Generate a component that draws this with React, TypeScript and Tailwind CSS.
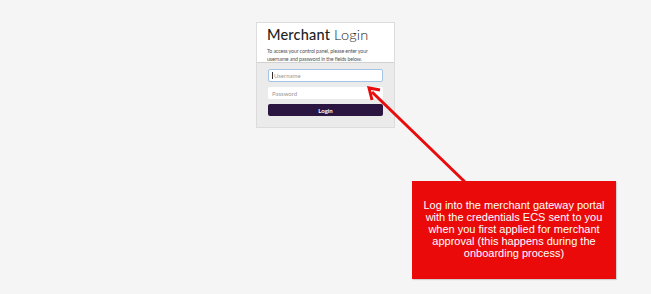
import React from "react";

export default function App() {
  return (
    <div className="relative w-[651px] h-[294px] bg-[#f5f5f5] overflow-hidden" style={{ fontFamily: "Lato, 'Open Sans', sans-serif" }}>
      <div className="flex justify-center pt-[22px]">
        <div className="w-[139px] border border-[#dcdcdc] bg-[#ebebeb]">
          <div className="bg-white pl-[10px] pt-[4px] h-[40px] border-b border-[#d0d0d0]">
            <div className="text-[14.5px] leading-[16px] text-[#222] tracking-[0.2px]">
              <span className="font-medium">Merchant</span> <span className="font-light">Login</span>
            </div>
            <div className="text-[5.3px] leading-[8px] text-[#555] mt-[4px] whitespace-nowrap tracking-[-0.15px]">
              To access your control panel, please enter your<br />username and password in the fields below.
            </div>
          </div>
          <div className="px-[11px] pt-[6px] pb-[11px] flex flex-col gap-[5px]">
            <div className="h-[13px] bg-white border border-[#a3c4e6] rounded-[2px] flex items-center px-[3px] text-[6px] text-[#999]">
              <span className="w-px h-[7px] bg-[#333] mr-[1px]" />Username
            </div>
            <div className="h-[12px] bg-white rounded-[2px] flex items-center px-[4px] text-[6px] text-[#999]">Password</div>
            <div className="h-[12px] bg-[#2a1640] rounded-[2px] flex items-center justify-center text-[6px] text-white font-bold">Login</div>
          </div>
        </div>
      </div>
      <div className="absolute left-[412px] top-[181px] w-[204px] h-[98px] bg-[#ea0a0a] shadow-[1px_1px_1px_rgba(0,0,0,0.15)] flex items-center justify-center text-center text-white text-[11px] leading-[12px]" style={{ fontFamily: "'Liberation Sans', Arial, sans-serif" }}>
        <div className="-mt-[2px]">
          Log into the merchant gateway portal<br />
          with the credentials ECS sent to you<br />
          when you first applied for merchant<br />
          approval (this happens during the<br />
          onboarding process)
        </div>
      </div>
      <svg className="absolute left-0 top-0" width="651" height="294">
        <line x1="465" y1="182" x2="372" y2="92" stroke="#e80c0c" strokeWidth="3" />
        <polyline points="380,90 369,88 372,100" fill="none" stroke="#e80c0c" strokeWidth="3" strokeLinejoin="miter" />
      </svg>
    </div>
  );
}
